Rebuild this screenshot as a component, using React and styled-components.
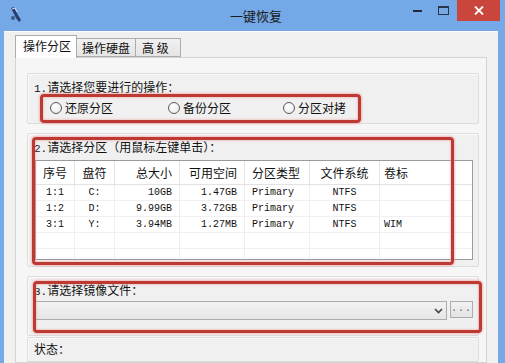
import React from "react";
import styled, { createGlobalStyle } from "styled-components";

const Global = createGlobalStyle`
  html, body {
    margin: 0;
    padding: 0;
    background: #74a8e6;
    overflow: hidden;
  }
  * { box-sizing: border-box; }
`;

const CN = `"Noto Sans CJK SC", "Noto Sans", sans-serif`;
const MONO = `"Liberation Mono", "DejaVu Sans Mono", monospace`;

const Window = styled.div`
  width: 505px;
  height: 363px;
  overflow: hidden;
  background: #74a8e6;
  display: flex;
  flex-direction: column;
  font-family: ${CN};
  font-size: 12px;
  color: #111;
`;

const TitleBar = styled.div`
  height: 31px;
  flex: none;
  display: flex;
  align-items: flex-start;
  padding: 0 5px 0 9px;
`;

const AppIcon = styled.div`
  width: 14px;
  height: 17px;
  margin-top: 6px;
`;

const Title = styled.div`
  flex: 1;
  text-align: center;
  font-size: 13px;
  line-height: 31px;
  color: #1b1b1b;
  padding-left: 85px;
`;

const Controls = styled.div`
  display: flex;
`;

const CtrlBtn = styled.div`
  width: ${p => p.w}px;
  height: 21px;
  display: flex;
  align-items: center;
  justify-content: center;
  background: ${p => (p.close ? "#c9463d" : "transparent")};
`;

const Client = styled.div`
  flex: 1;
  margin: 0 7px 0 4px;
  background: #f0f0f0;
  border-top: 1px solid #fafafa;
  padding: 3px 0 0 11px;
  display: flex;
  flex-direction: column;
`;

const TabStrip = styled.div`
  display: flex;
  align-items: flex-end;
  height: 22px;
  position: relative;
  z-index: 1;
`;

const Tab = styled.div`
  width: ${p => p.w}px;
  height: ${p => (p.active ? 23 : 19)}px;
  margin-bottom: ${p => (p.active ? -1 : 0)}px;
  border: 1px solid #acacac;
  border-bottom: ${p => (p.active ? "none" : "1px solid #acacac")};
  border-left: ${p => (p.first ? "1px solid #acacac" : "none")};
  background: ${p =>
    p.active ? "#ffffff" : "linear-gradient(#f0f0f0, #e5e5e5)"};
  padding-left: ${p => p.pad}px;
  line-height: ${p => (p.active ? 20 : 17)}px;
  font-size: 12px;
  white-space: pre;
`;

const TabPanel = styled.div`
  width: 472px;
  flex: 1;
  border: 1px solid #d4d4d4;
  background: #f6f6f6;
  padding: 15px 7px 0 11px;
  display: flex;
  flex-direction: column;
`;

const Group = styled.div`
  position: relative;
  height: ${p => (p.h ? `${p.h}px` : "auto")};
  flex: ${p => (p.h ? "none" : 1)};
  margin-bottom: ${p => p.mb || 0}px;
  border: 1px solid #dcdcdc;
  border-radius: 2px;
  background: #f0f0f0;
  box-shadow: inset 1px 1px 0 #fbfbfb;
  padding: ${p => p.pt || 6}px 5px 0 6px;
`;

const GroupLabel = styled.div`
  height: 14px;
  line-height: 14px;
  font-size: 12px;
  white-space: nowrap;
`;

const Num = styled.span`
  font-family: ${MONO};
  font-size: 11px;
`;

const RadioRow = styled.div`
  display: flex;
  margin-top: 7px;
  padding-left: 16px;
  height: 14px;
`;

const RadioItem = styled.label`
  width: ${p => p.w}px;
  display: flex;
  align-items: center;
  gap: 3px;
  line-height: 14px;
`;

const RadioDot = styled.span`
  width: 12px;
  height: 12px;
  border-radius: 50%;
  border: 1px solid #5a5a5a;
  background: radial-gradient(circle at 40% 35%, #ffffff, #e6e6e6);
`;

const Mark = styled.div`
  position: absolute;
  left: ${p => p.x}px;
  top: ${p => p.y}px;
  width: ${p => p.w}px;
  height: ${p => p.h}px;
  border: 3px solid #bd3a33;
  border-radius: 4px;
  box-shadow: 0 0 2px 1px rgba(240, 150, 150, 0.6),
    inset 0 0 2px 1px rgba(240, 160, 160, 0.5);
  pointer-events: none;
`;

const ListView = styled.div`
  margin: 6px 0 0 1px;
  height: 100px;
  border: 1px solid #9a9a9a;
  background: #ffffff;
  overflow: hidden;
`;

const Row = styled.div`
  display: grid;
  grid-template-columns: 39px 40px 65px 65px 65px 70px 1fr;
  height: ${p => (p.head ? 24 : 16)}px;
  border-bottom: 1px solid ${p => (p.head ? "#e3e3e3" : "#f0f0f0")};
`;

const Cell = styled.div`
  border-right: 1px solid ${p => (p.head ? "#e3e3e3" : "#efefef")};
  text-align: ${p => p.align || "left"};
  padding: ${p =>
    p.align === "right" ? "0 7px 0 0" : p.align === "center" ? "0" : `0 0 0 ${p.pl || 7}px`};
  line-height: ${p => (p.head ? 23 : 16)}px;
  font-family: ${p => (p.head ? CN : MONO)};
  font-size: ${p => (p.head ? 12 : 10)}px;
  white-space: nowrap;
  &:last-child {
    border-right: none;
  }
`;

const ComboRow = styled.div`
  display: flex;
  gap: 3px;
  margin-top: 4px;
  align-items: flex-start;
`;

const Combo = styled.div`
  width: 414px;
  height: 19px;
  margin-left: 1px;
  border: 1px solid #acacac;
  background: linear-gradient(#f2f2f2, #e6e6e6);
  display: flex;
  justify-content: flex-end;
  align-items: center;
  padding-right: 3px;
`;

const DotsButton = styled.div`
  width: 23px;
  height: 17px;
  border: 1px solid #adadad;
  background: linear-gradient(#f2f2f2, #e3e3e3);
  font-family: ${MONO};
  font-size: 10px;
  color: #666;
  text-align: center;
  line-height: 14px;
  letter-spacing: 1px;
`;

const columns = [
  { head: "序号", align: "center" },
  { head: "盘符", align: "center" },
  { head: "总大小", align: "right" },
  { head: "可用空间", align: "right" },
  { head: "分区类型", align: "left", pl: 7 },
  { head: "文件系统", align: "center" },
  { head: "卷标", align: "left", pl: 4 },
];

const rows = [
  ["1:1", "C:", "10GB", "1.47GB", "Primary", "NTFS", ""],
  ["1:2", "D:", "9.99GB", "3.72GB", "Primary", "NTFS", ""],
  ["3:1", "Y:", "3.94MB", "1.27MB", "Primary", "NTFS", "WIM"],
  ["", "", "", "", "", "", ""],
  ["", "", "", "", "", "", ""],
];

const App = () => (
  <Window>
    <Global />
    <TitleBar>
      <AppIcon>
        <svg width="14" height="17" viewBox="0 0 14 17">
          <path d="M2 2 L5 1 L9 9 L12 14 L10 16 L7 12 Z" fill="#27406e" />
          <path d="M3 3 L6 2 L8 6" stroke="#cfe0f5" strokeWidth="1" fill="none" />
          <circle cx="4" cy="12" r="2" fill="#3c5a8c" />
        </svg>
      </AppIcon>
      <Title>一键恢复</Title>
      <Controls>
        <CtrlBtn w={26}>
          <svg width="9" height="2">
            <rect width="9" height="2" fill="#1f2a3a" />
          </svg>
        </CtrlBtn>
        <CtrlBtn w={27}>
          <svg width="11" height="9">
            <rect x="0.5" y="0.5" width="10" height="8" fill="none" stroke="#2a3548" />
            <rect x="0.5" y="0.5" width="10" height="1.5" fill="#2a3548" />
          </svg>
        </CtrlBtn>
        <CtrlBtn w={43} close>
          <svg width="10" height="9" viewBox="0 0 10 9">
            <path d="M1 0.5 L9 8.5 M9 0.5 L1 8.5" stroke="#fff" strokeWidth="1.8" />
          </svg>
        </CtrlBtn>
      </Controls>
    </TitleBar>
    <Client>
      <TabStrip>
        <Tab w={62} pad={7} active first>操作分区</Tab>
        <Tab w={59} pad={5}>操作硬盘</Tab>
        <Tab w={45} pad={6}>{"高 级"}</Tab>
      </TabStrip>
      <TabPanel>
        <Group h={51} mb={9}>
          <GroupLabel>
            <Num>1.</Num>请选择您要进行的操作：
          </GroupLabel>
          <RadioRow>
            <RadioItem w={118}>
              <RadioDot />
              还原分区
            </RadioItem>
            <RadioItem w={115}>
              <RadioDot />
              备份分区
            </RadioItem>
            <RadioItem w={80}>
              <RadioDot />
              分区对拷
            </RadioItem>
          </RadioRow>
          <Mark x={12} y={20} w={321} h={29} />
        </Group>

        <Group h={134} mb={9}>
          <GroupLabel>
            <Num>2.</Num>请选择分区（用鼠标左键单击）：
          </GroupLabel>
          <ListView>
            <Row head>
              {columns.map(c => (
                <Cell key={c.head} head align={c.align} pl={c.pl}>
                  {c.head}
                </Cell>
              ))}
            </Row>
            {rows.map((r, i) => (
              <Row key={i}>
                {r.map((v, j) => (
                  <Cell key={j} align={columns[j].align} pl={columns[j].pl}>
                    {v}
                  </Cell>
                ))}
              </Row>
            ))}
          </ListView>
          <Mark x={4} y={3} w={422} h={128} />
        </Group>

        <Group h={60} mb={1}>
          <GroupLabel>
            <Num>3.</Num>请选择镜像文件：
          </GroupLabel>
          <ComboRow>
            <Combo>
              <svg width="9" height="6" viewBox="0 0 9 6">
                <path d="M1 1 L4.5 4.5 L8 1" stroke="#444" strokeWidth="1.6" fill="none" />
              </svg>
            </Combo>
            <DotsButton>...</DotsButton>
          </ComboRow>
          <Mark x={5} y={4} w={449} h={52} />
        </Group>

        <Group pt={4}>
          <GroupLabel>状态：</GroupLabel>
        </Group>
      </TabPanel>
    </Client>
  </Window>
);

export default App;
